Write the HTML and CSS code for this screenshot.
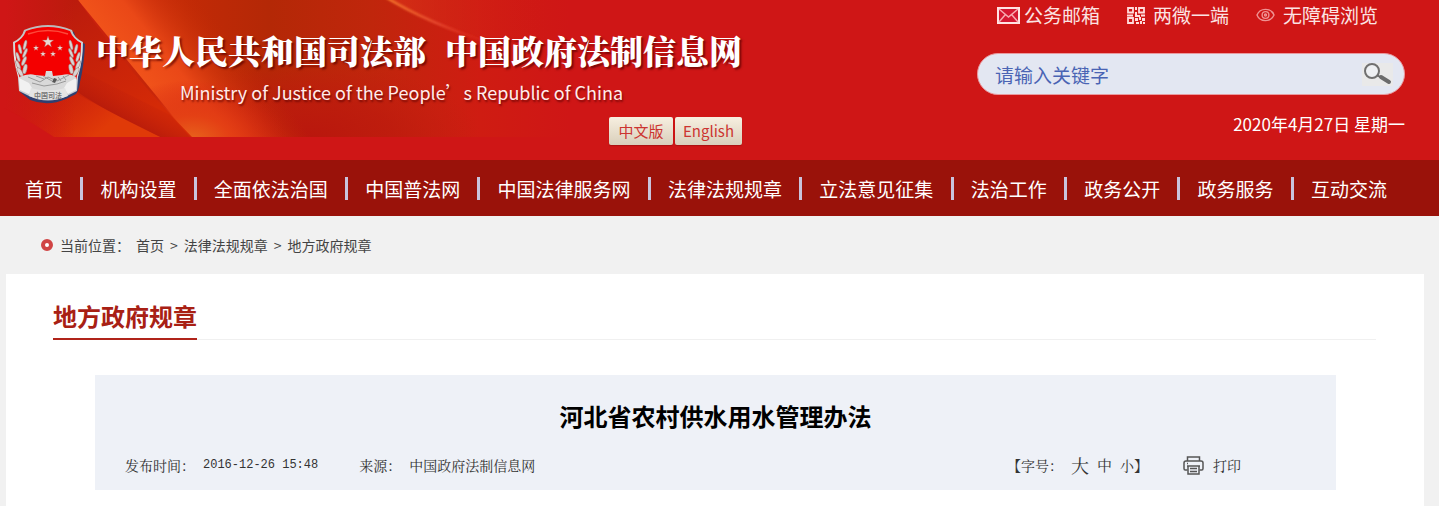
FILE: index.html
```html
<!DOCTYPE html>
<html lang="zh-CN">
<head>
<meta charset="utf-8">
<meta name="viewport" content="width=device-width, initial-scale=1">
<title>河北省农村供水用水管理办法</title>
<link rel="stylesheet" href="styles.css">
</head>
<body>
<header class="header">
  <svg class="header-art" viewBox="0 0 600 137" width="600" height="137" aria-hidden="true">
    <defs>
      <linearGradient id="base" x1="0" x2="1" y1="0" y2="0">
        <stop offset="0" stop-color="#cf1616"/><stop offset=".3" stop-color="#c32a06"/>
        <stop offset=".45" stop-color="#b42806"/><stop offset=".62" stop-color="#c0260c"/>
        <stop offset=".8" stop-color="#cf1c12"/><stop offset=".95" stop-color="#cf1616"/>
      </linearGradient>
      <radialGradient id="shade" gradientUnits="userSpaceOnUse" cx="0" cy="0" r="1" gradientTransform="translate(310 137) scale(170 75)">
        <stop offset="0" stop-color="#b9170d"/><stop offset=".5" stop-color="#bd190e" stop-opacity=".7"/><stop offset="1" stop-color="#c41c10" stop-opacity="0"/>
      </radialGradient>
      <linearGradient id="left" gradientUnits="userSpaceOnUse" x1="60" y1="10" x2="140" y2="120">
        <stop offset="0" stop-color="#bb1b0d"/><stop offset=".4" stop-color="#c5210a"/><stop offset="1" stop-color="#d42a07"/>
      </linearGradient>
      <linearGradient id="edge" gradientUnits="userSpaceOnUse" x1="5" y1="0" x2="75" y2="0">
        <stop offset="0" stop-color="#cf1616"/><stop offset="1" stop-color="#cf1616" stop-opacity="0"/>
      </linearGradient>
      <linearGradient id="flame" gradientUnits="userSpaceOnUse" x1="134" y1="68" x2="208" y2="8">
        <stop offset="0" stop-color="#f0521a"/><stop offset=".35" stop-color="#ea4817"/><stop offset="1" stop-color="#c02a05" stop-opacity="0"/>
      </linearGradient>
      <radialGradient id="glow" gradientUnits="userSpaceOnUse" cx="0" cy="0" r="1" gradientTransform="translate(192 140) scale(95 60)">
        <stop offset="0" stop-color="#e8641c"/><stop offset=".4" stop-color="#e33f14" stop-opacity=".9"/><stop offset="1" stop-color="#d01a10" stop-opacity="0"/>
      </radialGradient>
      <linearGradient id="wave" gradientUnits="userSpaceOnUse" x1="40" y1="80" x2="90" y2="140">
        <stop offset="0" stop-color="#cf1c10" stop-opacity="0"/><stop offset="1" stop-color="#e03a08"/>
      </linearGradient>
      <linearGradient id="fold" gradientUnits="userSpaceOnUse" x1="112" y1="115" x2="130" y2="82">
        <stop offset="0" stop-color="#b3190b" stop-opacity=".85"/><stop offset="1" stop-color="#c5210a" stop-opacity="0"/>
      </linearGradient>
      <linearGradient id="streak" gradientUnits="userSpaceOnUse" x1="385" y1="0" x2="490" y2="45">
        <stop offset="0" stop-color="#f47c2c"/><stop offset=".5" stop-color="#e84a30"/><stop offset="1" stop-color="#dc2418" stop-opacity=".2"/>
      </linearGradient>
      <linearGradient id="haze" gradientUnits="userSpaceOnUse" x1="400" y1="0" x2="560" y2="0">
        <stop offset="0" stop-color="#d83018" stop-opacity=".7"/><stop offset="1" stop-color="#cf1616" stop-opacity="0"/>
      </linearGradient>
      <filter id="soft"><feGaussianBlur stdDeviation="1"/></filter>
    </defs>
    <path fill="url(#base)" d="M0 0h600v137H0z"/>
    <path fill="url(#shade)" d="M140 50h400v87H140z"/>
    <path fill="url(#flame)" d="M78 0h192l90 137H190z"/>
    <path fill="url(#glow)" d="M90 70h220v67H90z"/>
    <path fill="url(#left)" d="M0 0h78q50 72 114 137H0z"/>
    <path fill="url(#fold)" d="M60 80l20-10 90 45 20 22h-30Q110 116 60 80z"/>
    <path fill="url(#wave)" d="M0 50Q80 98 160 137H0z"/>
    <path fill="url(#edge)" d="M0 0h80v137H0z"/>
    <path fill="#cf1616" d="M0 106Q25 118 54 137H0z"/>
    <path fill="url(#haze)" d="M388 0h180l22 60Q500 46 490 43 430 24 388 0z"/>
    <path fill="none" stroke="url(#streak)" stroke-width="2.500" filter="url(#soft)" d="M384-4Q425 22 490 43"/>
  </svg>

  <div class="brand">
    <svg class="emblem" viewBox="0 0 74 82" width="74" height="82" role="img" aria-label="司法部徽章">
      <defs>
        <linearGradient id="silver" x1="0" x2="0" y1="0" y2="1"><stop offset="0" stop-color="#b9b9b9"/><stop offset=".5" stop-color="#eee"/><stop offset="1" stop-color="#bfc4cc"/></linearGradient>
        <path id="star" d="M0-6 1.4-2 5.7-1.9 2.3.8 3.5 4.9 0 2.500-3.5 4.9-2.3.8-5.7-1.9-1.4-2z"/>
        <g id="wheat" fill="#d8d4d3" stroke="#96706c" stroke-width=".5">
          <ellipse cx="13" cy="21" rx="1.500" ry="5" transform="rotate(14 13 21)"/><ellipse cx="8" cy="25" rx="1.500" ry="5" transform="rotate(-14 8 25)"/>
          <ellipse cx="13" cy="29" rx="1.500" ry="5" transform="rotate(24 13 29)"/><ellipse cx="6" cy="33" rx="1.500" ry="5" transform="rotate(-18 6 33)"/>
          <ellipse cx="12" cy="37" rx="1.700" ry="5" transform="rotate(24 12 37)"/><ellipse cx="6" cy="41" rx="1.700" ry="5" transform="rotate(-24 6 41)"/>
          <ellipse cx="13" cy="45" rx="2" ry="5" transform="rotate(12 13 45)"/><ellipse cx="8" cy="48" rx="2" ry="5" transform="rotate(-30 8 48)"/>
        </g>
      </defs>
      <path fill="#2f3f70" d="M15 8Q37-1 62 8q1 8 11 12-1 22-5 38-1 8-4 12l-10 5q-18 8-36 1L8 68Q5 45 3 21q9-4 12-13z"/>
      <path fill="url(#silver)" d="M12 6Q36-4 60 6q2 8 11 12 0 18-5 35l-1 14-10 5q-19 9-38 0L7 67 6 53Q1 36 1 18q9-4 11-12z"/>
      <path fill="#f40000" d="M14 7Q36-1 58 7q3 8 11 12 0 18-5 37-28 8-56 0Q3 37 3 19 11 15 14 7z"/>
      <path fill="none" stroke="#ff5a48" stroke-width="1.500" d="M16 10Q36 3 56 10" opacity=".8"/>
      <g fill="#e9d6d2" stroke="#b54a44" stroke-width=".4">
        <use href="#star" x="36" y="18"/>
        <use href="#star" transform="translate(24 24) scale(.5)"/><use href="#star" transform="translate(48 24) scale(.5)"/>
        <use href="#star" transform="translate(31 30) scale(.5)"/><use href="#star" transform="translate(41 30) scale(.5)"/>
      </g>
      <use href="#wheat"/><use href="#wheat" transform="matrix(-1 0 0 1 72 0)"/>
      <path fill="#d9d9d9" d="M7 53q10-4 16-2l10 1 1-5h6l1 5 9-1q8-2 14 2l-3 14-8 4q-17 6-34 0l-9-4z"/>
      <path fill="none" stroke="#999" d="m16 53 12 5 8-5 9 4 12-6M20 59l12 3 13-2 9-3M31 52l9 5M24 52l8 3M46 53l3 4M51 52l3 4"/>
      <path fill="#f1f1f1" d="m7 54 10 5 3 5-3 6-9-4zM64 54l-9 5-3 5 4 6 8-4z"/>
      <path fill="#555" d="m42 54 3 1-2 4-3-1z"/>
      <path fill="#e4e4e4" d="M19 64q17 5 34 0l3 8q-19 8-39 0z"/>
      <text class="emblem-text" x="36" y="74" text-anchor="middle">中国司法</text>
    </svg>
    <div class="brand-words">
      <h1 class="site-name"><span>中华人民共和国司法部</span><span>中国政府法制信息网</span></h1>
      <p class="site-name-en">Ministry of Justice of the People’s Republic of China</p>
      <div class="languages">
        <button class="language" type="button">中文版</button>
        <button class="language" type="button">English</button>
      </div>
    </div>
  </div>

  <div class="tools">
    <nav class="quick-links" aria-label="快捷入口">
      <a class="mail-link" href="#"><svg width="23" height="17" viewBox="0 0 23 17" aria-hidden="true"><path fill="#d51732" stroke="#ffe3e3" stroke-width="2" d="M1 1h21v15H1z"/><path fill="none" stroke="#f7a9b0" stroke-width="1.500" d="m2 2 9.500 8L21 2M2 15l6-7m13 7-6-7"/></svg>公务邮箱</a>
      <a class="code-link" href="#"><svg width="18" height="17" viewBox="0 0 18 17" aria-hidden="true"><g fill="none" stroke="#ffdcdc" stroke-width="1.800"><path d="M1 1h5v4.500H1zM12 1h5v4.500h-5zM1 11h5v5H1z"/></g><path fill="#ffdcdc" d="M8 0h2v3H8zM8 5h2v3h3v2H8zM0 7.500h6v2H0zM14 7.500h4v2h-4zM8 11h3v3H8zM12 10h2v3h-2zM15 11h3v3h-3zM9 15h3v2H9zM13 14h2v3h-2zM16 15h2v2h-2z"/></svg>两微一端</a>
      <a class="access-link" href="#"><svg width="19" height="14" viewBox="0 0 19 14" aria-hidden="true"><g fill="none" stroke="#ef9292" stroke-width="1.400"><path d="M1 7C4 -.5 15 -.5 18 7 15 14.500 4 14.500 1 7z"/><circle cx="9.500" cy="7" r="3.400"/><circle cx="9.500" cy="7" r="1"/></g></svg>无障碍浏览</a>
    </nav>
    <form class="search" role="search">
      <input class="search-input" type="text" placeholder="请输入关键字" aria-label="请输入关键字">
      <button class="search-button" type="button" aria-label="搜索"><svg width="31" height="23" viewBox="0 0 31 23" aria-hidden="true"><path fill="#e9e9e9" d="M0 0h31v23H0z"/><circle cx="10" cy="8" r="7" fill="#eef0f3" stroke="#707070" stroke-width="2"/><path stroke="#6b6b6b" stroke-width="2" d="m15 12 3 2"/><path stroke="#6b6b6b" stroke-width="4" stroke-linecap="round" d="m19 14 8 5"/></svg></button>
    </form>
    <p class="today">2020年4月27日 星期一</p>
  </div>
</header>

<nav class="main-nav" aria-label="主导航">
  <a href="#">首页</a><i class="divider"></i>
  <a href="#">机构设置</a><i class="divider"></i>
  <a href="#">全面依法治国</a><i class="divider"></i>
  <a href="#">中国普法网</a><i class="divider"></i>
  <a href="#">中国法律服务网</a><i class="divider"></i>
  <a href="#">法律法规规章</a><i class="divider"></i>
  <a href="#">立法意见征集</a><i class="divider"></i>
  <a href="#">法治工作</a><i class="divider"></i>
  <a href="#">政务公开</a><i class="divider"></i>
  <a href="#">政务服务</a><i class="divider"></i>
  <a href="#">互动交流</a>
</nav>

<nav class="breadcrumb" aria-label="当前位置">
  <i class="ring"></i><span class="breadcrumb-label">当前位置：</span>
  <a href="#">首页</a><span>&gt;</span><a href="#">法律法规规章</a><span>&gt;</span><a href="#">地方政府规章</a>
</nav>

<main class="panel">
  <div class="section-head"><h2 class="section-title">地方政府规章</h2></div>
  <article class="article-head">
    <h3 class="article-title">河北省农村供水用水管理办法</h3>
    <div class="meta">
      <span class="published">发布时间：<time class="time" datetime="2016-12-26T15:48">2016-12-26 15:48</time></span>
      <span class="source">来源：<span>中国政府法制信息网</span></span>
      <div class="font-size">
        <span class="font-label">【字号：</span>
        <button class="size size-large" type="button">大</button>
        <button class="size size-medium" type="button">中</button>
        <button class="size" type="button">小</button><span>】</span>
      </div>
      <button class="print" type="button"><svg width="21" height="19" viewBox="0 0 21 19" aria-hidden="true"><g fill="none" stroke="#555" stroke-width="1.500"><path d="M4.500 5V1h12v4M4.500 14H2.200Q1 14 1 12.500V7q0-2 2-2h15q2 0 2 2v5.500q0 1.500-1.200 1.500h-2.300"/><path d="M5 10h11v8H5zM7 12.500h7M7 15.500h7M4 10h13M4 7.500h1"/></g></svg>打印</button>
    </div>
  </article>
</main>
</body>
</html>
```

FILE: styles.css
```css
* {
  box-sizing: border-box;
}

body {
  margin: 0;
  background: #f1f1f1;
  color: #333;
  font-family: "Noto Sans CJK SC", "Noto Sans", sans-serif;
  font-size: 14px;
}

h1, h2, h3, p {
  margin: 0;
}

a {
  color: inherit;
  text-decoration: none;
}

button {
  padding: 0;
  border: 0;
  background: none;
  color: inherit;
  font: inherit;
  cursor: pointer;
}

svg {
  flex: none;
}

/* Header */
.header {
  position: relative;
  display: flex;
  justify-content: space-between;
  min-height: 160px;
  padding-right: 34px;
  background: #cf1616;
  color: #fff;
}

.header-art {
  position: absolute;
  top: 0;
  left: 0;
}

.brand {
  position: relative;
  display: flex;
  align-items: flex-start;
  gap: 10px;
  padding: 24px 0 0 12px;
}

.emblem-text {
  fill: #777;
  font-size: 7px;
  font-weight: 700;
}

.brand-words {
  display: flex;
  flex-direction: column;
  padding-top: 5px;
  white-space: nowrap;
}

.site-name {
  display: flex;
  gap: 19px;
  font-family: "Noto Serif CJK SC", "Noto Sans CJK SC", sans-serif;
  font-size: 33px;
  font-weight: 900;
  line-height: 42px;
  text-shadow: 2px 2px 2px rgba(90, 0, 0, .7);
}

.site-name-en {
  padding-left: 84px;
  color: #ffeceb;
  font-size: 18px;
  line-height: 42px;
  text-shadow: 1px 2px 2px rgba(90, 0, 0, .7);
}

.languages {
  display: flex;
  justify-content: flex-end;
  gap: 2px;
  padding-top: 4px;
}

.language {
  min-width: 64px;
  height: 28px;
  padding: 0 8px;
  border-radius: 2px;
  background: linear-gradient(#f7efe0, #d9cfbb);
  box-shadow: 0 1px 1px #a11;
  color: #cc3430;
  font-size: 15px;
  line-height: 28px;
}

.tools {
  position: relative;
  display: flex;
  flex-direction: column;
  width: 428px;
}

.quick-links {
  display: flex;
  justify-content: flex-end;
  gap: 27px;
  padding-right: 27px;
  color: #fbe3e3;
  font-size: 19px;
  line-height: 30px;
  white-space: nowrap;
}

.quick-links a {
  display: flex;
  align-items: center;
  gap: 8px;
}

.quick-links .mail-link {
  gap: 4px;
}

.search {
  display: flex;
  align-items: center;
  height: 42px;
  margin-top: 23px;
  padding: 0 11px 0 17px;
  border: 1px solid #e99a9f;
  border-radius: 21px;
  background: #e3e7f2;
}

.search-input {
  flex: 1;
  min-width: 0;
  padding: 0;
  border: 0;
  outline: 0;
  background: none;
  color: #4a64b4;
  font: inherit;
  font-size: 19px;
}

.search-input::placeholder {
  color: #4a64b4;
  opacity: 1;
}

.search-button {
  display: flex;
}

.today {
  padding-top: 17px;
  font-size: 17px;
  line-height: 24px;
  text-align: right;
}

/* Main navigation */
.main-nav {
  display: flex;
  align-items: center;
  justify-content: space-between;
  height: 56px;
  padding: 0 52px 0 25px;
  background: #9a120a;
  color: #fff;
  font-size: 19px;
  white-space: nowrap;
}

.divider {
  width: 3px;
  height: 23px;
  background: #c9c3dc;
}

/* Breadcrumb */
.breadcrumb {
  display: flex;
  align-items: center;
  gap: 6px;
  height: 58px;
  padding-left: 41px;
  color: #444;
}

.ring {
  width: 12px;
  height: 12px;
  margin-right: 1px;
  border: 4px solid #d04444;
  border-radius: 50%;
  background: #fff;
}

/* Content */
.panel {
  min-height: 232px;
  margin: 0 15px 0 6px;
  padding: 24px 48px 16px 47px;
  background: #fff;
}

.section-head {
  display: flex;
  border-bottom: 1px solid #f0f0f0;
}

.section-title {
  margin-bottom: -1px;
  padding-bottom: 4px;
  border-bottom: 2px solid #b0241a;
  color: #a82014;
  font-size: 24px;
  line-height: 36px;
}

.article-head {
  margin: 35px 40px 0 42px;
  padding: 23px 95px 14px 30px;
  background: #eef1f7;
}

.article-title {
  padding-left: 65px;
  color: #000;
  font-size: 24px;
  line-height: 36px;
  text-align: center;
}

.meta {
  display: flex;
  align-items: center;
  height: 22px;
  margin-top: 20px;
  font-family: "Noto Serif CJK SC", "Noto Sans CJK SC", serif;
  line-height: 20px;
  white-space: nowrap;
}

.published {
  display: flex;
  align-items: center;
  gap: 8px;
}

.time {
  font-family: "Liberation Mono", monospace;
  font-size: 12px;
}

.source {
  display: flex;
  gap: 8px;
  margin-left: 41px;
}

.font-size {
  display: flex;
  align-items: center;
  margin-left: auto;
}

.font-label {
  margin-right: 8px;
}

.size-large {
  margin-right: 8px;
  font-size: 18px;
}

.size-medium {
  margin-right: 8px;
  font-size: 15px;
}

.print {
  display: flex;
  align-items: center;
  gap: 9px;
  margin-left: 35px;
}
```
